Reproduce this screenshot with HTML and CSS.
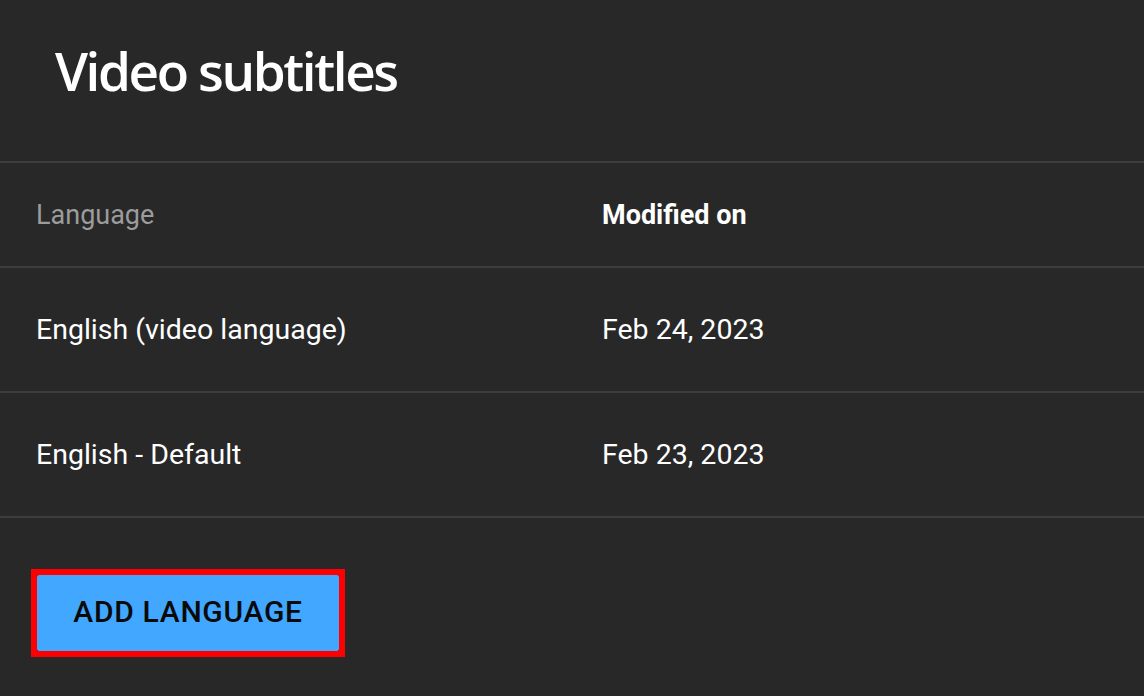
FILE: index.html
```html
<!DOCTYPE html>
<html>
<head>
<meta charset="utf-8">
<link rel="stylesheet" href="styles.css">
</head>
<body>
<div class="page">
  <header class="title-bar">
    <h1 class="title">Video subtitles</h1>
  </header>
  <div class="table">
    <div class="row head">
      <div class="cell lang muted">Language</div>
      <div class="cell date bold">Modified on</div>
    </div>
    <div class="row">
      <div class="cell lang">English (video language)</div>
      <div class="cell date">Feb 24, 2023</div>
    </div>
    <div class="row">
      <div class="cell lang">English - Default</div>
      <div class="cell date">Feb 23, 2023</div>
    </div>
  </div>
  <div class="actions">
    <div class="highlight">
      <button class="btn">ADD LANGUAGE</button>
    </div>
  </div>
</div>
</body>
</html>
```
FILE: styles.css
```css
html, body {
  margin: 0;
  padding: 0;
  background: #282828;
  height: 100%;
}
.page {
  width: 1144px;
  height: 696px;
  background: #282828;
  color: #fff;
  font-family: Roboto, "Liberation Sans", sans-serif;
  overflow: hidden;
}
.title-bar {
  height: 161px;
  box-sizing: border-box;
  padding-left: 55px;
  padding-top: 36px;
}
.title {
  margin: 0;
  font-family: "Open Sans", "Noto Sans", sans-serif;
  font-weight: 600;
  font-size: 53px;
  letter-spacing: -2.4px;
  line-height: 70px;
  color: #fff;
}
.table {
  border-top: 2px solid #3d3d3d;
}
.row {
  display: flex;
  align-items: center;
  height: 123px;
  border-bottom: 2px solid #3d3d3d;
}
.row.head {
  height: 103px;
}
.cell {
  font-size: 28.5px;
  line-height: 34px;
}
.cell.lang {
  width: 566px;
  padding-left: 36px;
}
.cell.date {
  flex: 1;
}
.muted {
  color: #9c9c9c;
  font-size: 27px;
}
.bold {
  font-weight: 700;
  font-size: 27px;
}
.actions {
  padding-top: 51px;
  padding-left: 31px;
}
.highlight {
  display: inline-block;
  border: 6px solid #ff0000;
}
.btn {
  display: block;
  width: 302px;
  height: 76px;
  border: none;
  border-radius: 2px;
  background: #41a7ff;
  color: #0a0a0a;
  font-family: Roboto, "Liberation Sans", sans-serif;
  font-weight: 500;
  font-size: 30px;
  letter-spacing: 0.7px;
  padding: 0 0 4px 0;
}
```
